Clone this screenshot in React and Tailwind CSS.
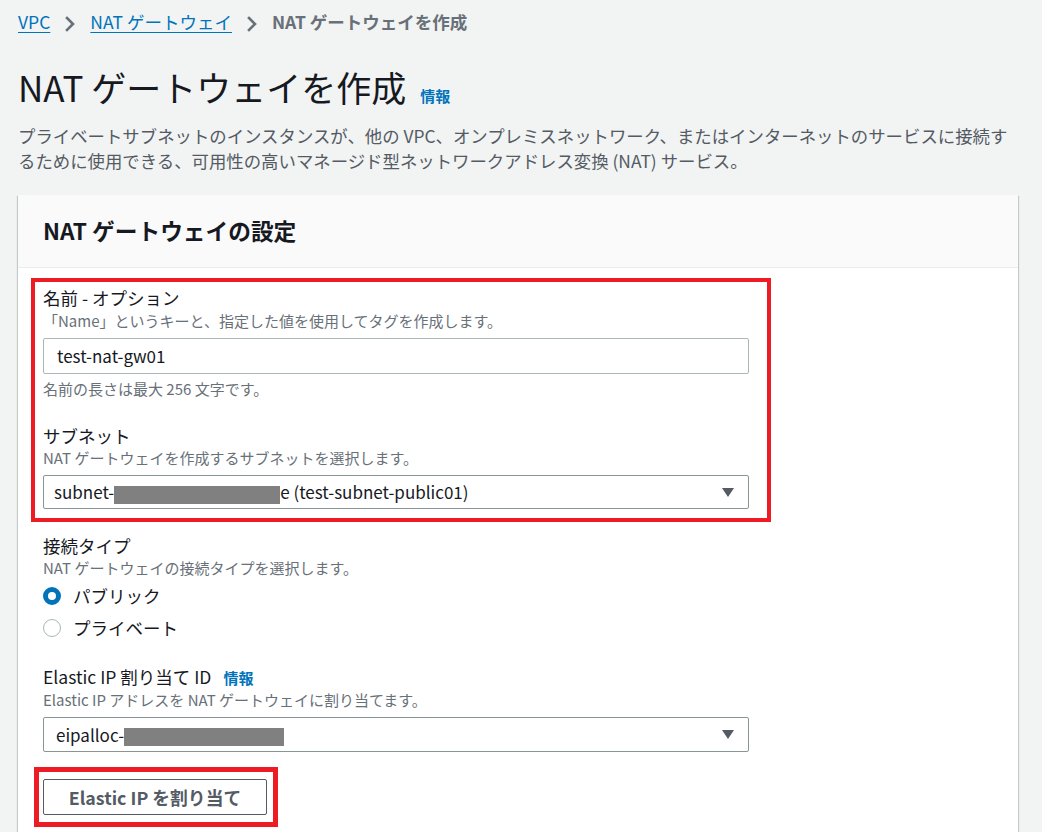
import React from "react";

const FONT = { fontFamily: '"Noto Sans CJK JP", "Noto Sans", sans-serif' };

function Chevron() {
  return (
    <svg width="12" height="16" viewBox="0 0 12 16" className="mx-[14px] mt-[3px]">
      <path d="M3 2 L9 8 L3 14" fill="none" stroke="#687078" strokeWidth="2.6" strokeLinecap="square" />
    </svg>
  );
}

function Caret() {
  return (
    <svg width="14" height="11" viewBox="0 0 14 11" className="shrink-0">
      <path d="M1 1 L13 1 L7 10 Z" fill="#545b64" />
    </svg>
  );
}

function Redact({ w }) {
  return <span className="inline-block h-[18px] bg-[#808080] align-middle" style={{ width: w }} />;
}

export default function App() {
  return (
    <div className="min-h-[832px] w-[1042px] overflow-hidden bg-[#f2f3f3] text-[#16191f]" style={FONT}>
      <div className="pl-[18px]">
        {/* Breadcrumb */}
        <div className="flex h-[44px] items-center text-[17.5px] leading-[22px]">
          <span className="text-[#0073bb] underline underline-offset-[3px]">VPC</span>
          <Chevron />
          <span className="text-[#0073bb] underline underline-offset-[3px]">NAT ゲートウェイ</span>
          <Chevron />
          <span className="font-bold text-[#687078]">NAT ゲートウェイを作成</span>
        </div>

        {/* Title */}
        <div className="mt-[21px] flex items-baseline">
          <h1 className="text-[35px] font-normal leading-[44px] text-[#16191f]">NAT ゲートウェイを作成</h1>
          <span className="ml-[14px] text-[15px] font-bold text-[#0073bb]">情報</span>
        </div>

        {/* Description */}
        <p className="mt-[14px] whitespace-nowrap text-[17.4px] leading-[25px] text-[#545b64]">
          プライベートサブネットのインスタンスが、他の VPC、オンプレミスネットワーク、またはインターネットのサービスに接続す
          <br />
          るために使用できる、可用性の高いマネージド型ネットワークアドレス変換 (NAT) サービス。
        </p>

        {/* Card */}
        <div className="mt-[22px] min-h-[640px] w-[1000px] bg-white shadow-[0_1px_1px_0_rgba(0,28,36,0.3),1px_1px_1px_0_rgba(0,28,36,0.15),-1px_1px_1px_0_rgba(0,28,36,0.15)]">
          <div className="flex h-[73px] items-center border-b border-[#eaeded] bg-[#fafafa] pl-[25px]">
            <h2 className="text-[22.7px] font-bold leading-[28px] text-[#16191f]">NAT ゲートウェイの設定</h2>
          </div>

          <div className="pl-[25px] pt-[10px]">
            {/* Red box 1 */}
            <div className="-ml-[12px] w-[740px] border-4 border-[#ed1c24] pb-[9px] pl-[8px] pr-[18px] pt-[5px]">
              <div className="text-[17.5px] leading-[22px]">名前 - オプション</div>
              <div className="mt-[2px] text-[15px] leading-[20px] text-[#687078]">「Name」というキーと、指定した値を使用してタグを作成します。</div>
              <div className="mt-[7px] flex h-[36px] items-center rounded-[2px] border border-[#aab7b8] pl-[13px] text-[17px]">
                test-nat-gw01
              </div>
              <div className="mt-[5px] text-[15px] leading-[20px] text-[#687078]">名前の長さは最大 256 文字です。</div>
              <div className="mt-[26px] text-[17.5px] leading-[22px]">サブネット</div>
              <div className="mt-[1px] text-[15px] leading-[20px] text-[#687078]">NAT ゲートウェイを作成するサブネットを選択します。</div>
              <div className="mt-[7px] flex h-[34px] items-center justify-between rounded-[2px] border border-[#879596] pl-[10px] pr-[13px] text-[17px]">
                <span className="whitespace-nowrap">
                  subnet-<Redact w={166} />e (test-subnet-public01)
                </span>
                <Caret />
              </div>
            </div>

            {/* Connectivity type */}
            <div className="w-[706px]">
              <div className="mt-[13px] text-[17.5px] leading-[22px]">接続タイプ</div>
              <div className="mt-[1px] text-[15px] leading-[20px] text-[#687078]">NAT ゲートウェイの接続タイプを選択します。</div>
              <div className="mt-[2px]">
                <div className="flex h-[32px] items-center">
                  <span className="box-border h-[18px] w-[18px] rounded-full border-[5px] border-[#0073bb] bg-white" />
                  <span className="ml-[12px] text-[17.5px]">パブリック</span>
                </div>
                <div className="flex h-[32px] items-center">
                  <span className="box-border h-[18px] w-[18px] rounded-full border-[1.5px] border-[#aab7b8] bg-white" />
                  <span className="ml-[12px] text-[17.5px]">プライベート</span>
                </div>
              </div>

              <div className="mt-[22px] flex items-baseline text-[17.5px] leading-[22px]">
                <span>Elastic IP 割り当て ID</span>
                <span className="ml-[12px] text-[15px] font-bold text-[#0073bb]">情報</span>
              </div>
              <div className="mt-[1px] text-[15px] leading-[20px] text-[#687078]">Elastic IP アドレスを NAT ゲートウェイに割り当てます。</div>
              <div className="mt-[7px] flex h-[35px] items-center justify-between rounded-[2px] border border-[#879596] pl-[12px] pr-[13px] text-[17px]">
                <span className="whitespace-nowrap">
                  eipalloc-<Redact w={160} />
                </span>
                <Caret />
              </div>
            </div>

            {/* Red box 2 */}
            <div className="-ml-[9px] mt-[15px] w-[244px] border-[5px] border-[#ed1c24] pb-[7px] pl-[4px] pr-[6px] pt-[7px]">
              <div className="flex h-[36px] w-[224px] items-center justify-center rounded-[2px] border border-[#545b64] text-[17.8px] font-bold text-[#545b64]">
                Elastic IP を割り当て
              </div>
            </div>
          </div>
        </div>
      </div>
    </div>
  );
}
